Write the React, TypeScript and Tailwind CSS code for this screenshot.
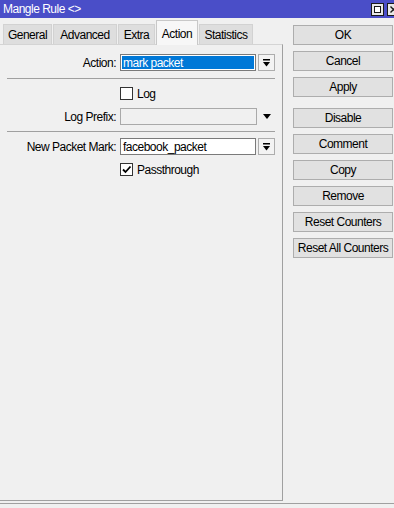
import React from "react";

const font = "font-['Liberation_Sans',Arial,sans-serif] text-[12px] tracking-[-0.5px]";

function DropBtn() {
  return (
    <div className="ml-[2px] flex h-[17px] w-[17px] items-center justify-center border border-[#adadad] bg-[#f3f3f3]">
      <svg width="7" height="8" viewBox="0 0 7 8">
        <rect x="0" y="0" width="7" height="1.5" fill="#000" />
        <path d="M0 3 L7 3 L3.5 7.5 Z" fill="#000" />
      </svg>
    </div>
  );
}

function CheckBox({ checked }: { checked?: boolean }) {
  return (
    <div className="flex h-[13px] w-[13px] items-center justify-center border border-[#333] bg-white">
      {checked && (
        <svg width="11" height="11" viewBox="0 0 11 11">
          <path d="M2 5.5 L4.5 8 L9.5 2.5" stroke="#000" strokeWidth="1.8" fill="none" />
        </svg>
      )}
    </div>
  );
}

function Separator() {
  return <div className="ml-[7px] h-px w-[268px] bg-[#a0a0a0]" />;
}

function Btn({ label, className = "" }: { label: string; className?: string }) {
  return (
    <button className={`h-[20px] w-[100px] border border-[#adadad] bg-[#e1e1e1] ${className}`}>{label}</button>
  );
}

const tabs = [
  { label: "General", w: "w-[49px]" },
  { label: "Advanced", w: "w-[64px]" },
  { label: "Extra", w: "w-[37px]" },
  { label: "Action", w: "w-[42px]", active: true },
  { label: "Statistics", w: "w-[54px]" },
];

export default function App() {
  return (
    <div className={`flex h-[508px] w-[394px] flex-col overflow-hidden bg-[#f0f0f0] text-black ${font}`}>
      {/* title bar */}
      <div className="flex h-[18px] shrink-0 items-center bg-[#4a4ec8] pl-[3px] text-white">
        <span>Mangle Rule &lt;&gt;</span>
        <div className="ml-auto flex gap-[3px]" style={{ marginRight: -6 }}>
          <div className="flex h-[13px] w-[13px] items-center justify-center border border-[#1a1a1a] bg-[#e8e8e8]">
            <div className="h-[7px] w-[7px] border border-[#1a1a1a] bg-white" />
          </div>
          <div className="flex h-[13px] w-[13px] items-center justify-center border border-[#1a1a1a] bg-[#e8e8e8]">
            <svg width="7" height="7" viewBox="0 0 7 7">
              <path d="M0.5 0.5 L6.5 6.5 M6.5 0.5 L0.5 6.5" stroke="#1a1a1a" strokeWidth="1.4" />
            </svg>
          </div>
        </div>
      </div>

      <div className="flex min-h-0 flex-1">
        {/* left: tabs + panel */}
        <div className="flex w-[283px] shrink-0 flex-col">
          <div className="relative z-10 -mb-px flex h-[27px] items-end gap-px pl-[3px]">
            {tabs.map((t) =>
              t.active ? (
                <div
                  key={t.label}
                  className={`${t.w} flex h-[25px] items-start justify-center border border-b-0 border-[#c8c8c8] bg-[#f7f7f7] pt-[4px]`}
                >
                  {t.label}
                </div>
              ) : (
                <div
                  key={t.label}
                  className={`${t.w} mb-px flex h-[20px] items-center justify-center border border-b-0 border-[#d2d2d2] bg-[#dedede]`}
                >
                  {t.label}
                </div>
              )
            )}
          </div>

          <div className="flex-1 border-t border-r border-b border-t-[#d4d4d4] border-r-[#a0a0a0] border-b-[#a0a0a0] pt-[9px]">
            {/* Action */}
            <div className="flex h-[17px] items-center">
              <div className="w-[116px] text-right">Action:</div>
              <div className="ml-[4px] flex h-[17px] w-[136px] items-center border border-[#7a7a7a] bg-white p-px">
                <div className="flex h-full w-full items-center bg-[#0078d7] pl-[1px] text-white">mark packet</div>
              </div>
              <DropBtn />
            </div>

            <div className="mt-[7px]">
              <Separator />
            </div>

            {/* Log */}
            <div className="mt-[8px] flex h-[13px] items-center pl-[120px]">
              <CheckBox />
              <span className="ml-[4px]">Log</span>
            </div>

            {/* Log Prefix */}
            <div className="mt-[8px] flex h-[17px] items-center">
              <div className="w-[116px] text-right">Log Prefix:</div>
              <div className="ml-[4px] h-[17px] w-[137px] border border-[#a9a9a9] bg-[#f0f0f0]" />
              <svg className="ml-[6px]" width="8" height="5" viewBox="0 0 8 5">
                <path d="M0 0 L8 0 L4 5 Z" fill="#000" />
              </svg>
            </div>

            <div className="mt-[6px]">
              <Separator />
            </div>

            {/* New Packet Mark */}
            <div className="mt-[6px] flex h-[17px] items-center">
              <div className="w-[116px] text-right">New Packet Mark:</div>
              <div className="ml-[4px] flex h-[17px] w-[136px] items-center border border-[#7a7a7a] bg-white pl-[2px]">
                facebook_packet
              </div>
              <DropBtn />
            </div>

            {/* Passthrough */}
            <div className="mt-[8px] flex h-[13px] items-center pl-[120px]">
              <CheckBox checked />
              <span className="ml-[4px]">Passthrough</span>
            </div>
          </div>
        </div>

        {/* right: buttons */}
        <div className="flex flex-1 flex-col gap-[6px] pl-[10px] pt-[7px]">
          <Btn label="OK" className="border-[#222]" />
          <Btn label="Cancel" />
          <Btn label="Apply" />
          <Btn label="Disable" className="mt-[5px]" />
          <Btn label="Comment" />
          <Btn label="Copy" />
          <Btn label="Remove" />
          <Btn label="Reset Counters" />
          <Btn label="Reset All Counters" />
        </div>
      </div>

      {/* bottom edge */}
      <div className="h-[7px] shrink-0 pt-[2px]">
        <div className="h-px w-full bg-[#a0a0a0]" />
      </div>
    </div>
  );
}
